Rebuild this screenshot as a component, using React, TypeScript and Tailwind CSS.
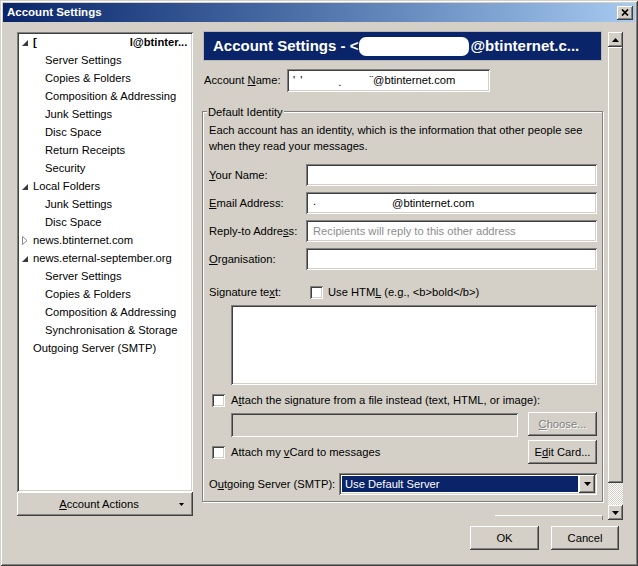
import React from "react";

const raised =
  "bg-[#d4d0c8] shadow-[inset_-1px_-1px_0_#404040,inset_1px_1px_0_#ffffff,inset_-2px_-2px_0_#808080,inset_2px_2px_0_#d4d0c8]";
const sunken =
  "shadow-[inset_1px_1px_0_#808080,inset_-1px_-1px_0_#ffffff,inset_2px_2px_0_#404040,inset_-2px_-2px_0_#d4d0c8]";

type TreeNode = { label: React.ReactNode; depth: 0 | 1; arrow?: "open" | "closed" };

const AccountLabel = () => (
  <span className="flex items-center font-bold">
    <span>[</span>
    <span className="inline-block w-[93px]" />
    <span>l@btinter...</span>
  </span>
);

const nodes: TreeNode[] = [
  { label: <AccountLabel />, depth: 0, arrow: "open" },
  { label: "Server Settings", depth: 1 },
  { label: "Copies & Folders", depth: 1 },
  { label: "Composition & Addressing", depth: 1 },
  { label: "Junk Settings", depth: 1 },
  { label: "Disc Space", depth: 1 },
  { label: "Return Receipts", depth: 1 },
  { label: "Security", depth: 1 },
  { label: "Local Folders", depth: 0, arrow: "open" },
  { label: "Junk Settings", depth: 1 },
  { label: "Disc Space", depth: 1 },
  { label: "news.btinternet.com", depth: 0, arrow: "closed" },
  { label: "news.eternal-september.org", depth: 0, arrow: "open" },
  { label: "Server Settings", depth: 1 },
  { label: "Copies & Folders", depth: 1 },
  { label: "Composition & Addressing", depth: 1 },
  { label: "Synchronisation & Storage", depth: 1 },
  { label: "Outgoing Server (SMTP)", depth: 0 },
];

const Arrow = ({ kind }: { kind?: "open" | "closed" }) => {
  if (kind === "open")
    return (
      <svg width="6" height="6" viewBox="0 0 6 6" className="mt-[2px]">
        <polygon points="6,0 6,6 0,6" fill="#3a3a3a" />
      </svg>
    );
  if (kind === "closed")
    return (
      <svg width="6" height="9" viewBox="0 0 6 9">
        <polygon points="0.5,0.5 5,4.5 0.5,8.5" fill="#fff" stroke="#8a8a8a" strokeWidth="1" />
      </svg>
    );
  return null;
};

const Check = () => <span className={`inline-block w-[13px] h-[13px] bg-white shrink-0 ${sunken}`} />;

const Tri = ({ dir }: { dir: "up" | "down" }) => (
  <svg width="7" height="4" viewBox="0 0 7 4">
    <polygon points={dir === "up" ? "0,4 3.5,0 7,4" : "0,0 7,0 3.5,4"} fill="#000" />
  </svg>
);

const Field = ({ children, className = "" }: { children?: React.ReactNode; className?: string }) => (
  <div className={`h-[22px] bg-white flex items-center pl-[7px] ${sunken} ${className}`}>{children}</div>
);

const Row = ({ label, children }: { label: React.ReactNode; children?: React.ReactNode }) => (
  <div className="flex items-center h-[22px]">
    <div className="w-[97px]">{label}</div>
    <Field className="w-[291px]">{children}</Field>
  </div>
);

export default function App() {
  return (
    <div className="w-[638px] h-[566px] bg-[#d4d0c8] p-[3px] flex flex-col text-[11.2px] text-black font-['Liberation_Sans',Arial,sans-serif] shadow-[inset_1px_1px_0_#d4d0c8,inset_-1px_-1px_0_#404040,inset_2px_2px_0_#ffffff,inset_-2px_-2px_0_#808080]">
      {/* title bar */}
      <div className="h-[19px] flex items-center bg-gradient-to-r from-[#0a246a] to-[#a6caf0] pl-[4px] pr-[2px]">
        <span className="text-white font-bold text-[11.5px] flex-1">Account Settings</span>
        <div className={`w-[16px] h-[14px] flex items-center justify-center ${raised}`}>
          <svg width="8" height="7" viewBox="0 0 8 7">
            <path d="M1 0.5 L7 6.5 M7 0.5 L1 6.5" stroke="#000" strokeWidth="1.7" />
          </svg>
        </div>
      </div>

      <div className="flex pl-[14px] pt-[10px]">
        {/* left column */}
        <div className="w-[176px] flex flex-col">
          <div className={`h-[460px] bg-white p-[2px] ${sunken}`}>
            <div className="-mt-px">
              {nodes.map((n, i) => (
                <div key={i} className={`h-[18px] flex items-center ${n.depth === 1 ? "pl-[26px]" : "pl-0"}`}>
                  {n.depth === 0 && (
                    <span className="w-[14px] flex items-center pl-[3px]">
                      <Arrow kind={n.arrow} />
                    </span>
                  )}
                  <span className="whitespace-nowrap">{n.label}</span>
                </div>
              ))}
            </div>
          </div>
          <div className={`h-[24px] flex items-center ${raised}`}>
            <span className="flex-1 text-center pl-[2px]">
              <u>A</u>ccount Actions
            </span>
            <span className="w-[14px] flex items-center">
              <svg width="5" height="3" viewBox="0 0 5 3">
                <polygon points="0,0 5,0 2.5,3" fill="#000" />
              </svg>
            </span>
          </div>
        </div>

        {/* right column */}
        <div className="ml-[7px] flex">
          <div className="w-[405px] flex flex-col">
            <div className="-mt-px ml-[3px] w-[399px] h-[30px] bg-[#0a246a] border border-[#b8b8b8] flex items-center pl-[9px] text-white font-bold text-[15px] whitespace-nowrap overflow-hidden">
              <span>Account Settings - &lt;</span>
              <span className="inline-block w-[110px] h-[19px] bg-white rounded-[7px] mx-[1px]" />
              <span>@btinternet.c...</span>
            </div>

            <div className="mt-[8px] h-[23px] flex items-center">
              <span className="ml-[4px] w-[83px]">
                Account <u>N</u>ame:
              </span>
              <div className={`w-[203px] h-[23px] bg-white flex items-center pl-[6px] ${sunken}`}>
                <span>'</span>
                <span className="ml-[5px]">'</span>
                <span className="ml-[36px] mt-[4px]">.</span>
                <span className="ml-[28px]">¨@btinternet.com</span>
              </div>
            </div>

            {/* Default Identity groupbox */}
            <div className="relative mt-[19px] ml-[2px] w-[401px] h-[391px] border border-[#808080] shadow-[inset_1px_1px_0_#ffffff,1px_1px_0_#ffffff] pl-[6px] pr-[5px] pt-[10px]">
              <span className="absolute -top-[8px] left-[4px] bg-[#d4d0c8] px-[1px]">Default Identity</span>
              <div className="leading-[16px]">
                Each account has an identity, which is the information that other people see
                <br />
                when they read your messages.
              </div>

              <div className="mt-[10px] flex flex-col gap-[6px]">
                <Row label={<><u>Y</u>our Name:</>} />
                <Row label={<><u>E</u>mail Address:</>}>
                  <span className="mt-[-4px]">.</span>
                  <span className="ml-[76px]">@btinternet.com</span>
                </Row>
                <Row label={<>Reply-to Addre<u>s</u>s:</>}>
                  <span className="text-[#8d8d8d]">Recipients will reply to this other address</span>
                </Row>
                <Row label={<><u>O</u>rganisation:</>} />
              </div>

              <div className="mt-[13px] h-[18px] flex items-center">
                <span className="w-[97px]">
                  Signature te<u>x</u>t:
                </span>
                <span className="ml-[4px] flex">
                  <Check />
                </span>
                <span className="ml-[5px]">
                  Use HTM<u>L</u> (e.g., &lt;b&gt;bold&lt;/b&gt;)
                </span>
              </div>

              <div className={`mt-[4px] ml-[22px] w-[366px] h-[80px] bg-white ${sunken}`} />

              <div className="mt-[7px] h-[16px] flex items-center pl-[3px]">
                <Check />
                <span className="ml-[6px]">
                  A<u>t</u>tach the signature from a file instead (text, HTML, or image):
                </span>
              </div>

              <div className="mt-[4px] h-[25px] flex items-start pl-[22px]">
                <div className={`mt-px w-[287px] h-[24px] ${sunken}`} />
                <div className={`ml-[10px] w-[69px] h-[24px] flex items-center justify-center text-[#808080] [text-shadow:1px_1px_0_#ffffff] ${raised}`}>
                  <span>
                    <u>C</u>hoose...
                  </span>
                </div>
              </div>

              <div className="mt-[3px] h-[24px] flex items-center pl-[3px]">
                <Check />
                <span className="ml-[6px] flex-1">
                  Attach my <u>v</u>Card to messages
                </span>
                <div className={`w-[69px] h-[24px] flex items-center justify-center ${raised}`}>
                  <span>
                    E<u>d</u>it Card...
                  </span>
                </div>
              </div>

              <div className="mt-[9px] h-[22px] flex items-center">
                <span className="w-[130px]">
                  O<u>u</u>tgoing Server (SMTP):
                </span>
                <div className={`w-[258px] h-[22px] bg-white p-[2px] flex ${sunken}`}>
                  <div className="flex-1 bg-[#0a246a] text-white flex items-center pl-[3px] border border-white">
                    Use Default Server
                  </div>
                  <div className={`w-[16px] flex items-center justify-center ${raised}`}>
                    <Tri dir="down" />
                  </div>
                </div>
              </div>
            </div>

            <div className="mt-[13px] ml-[295px] w-[108px] h-[5px] border-t border-white border-r border-r-[#808080]" />
          </div>

          {/* scrollbar */}
          <div className="ml-[3px] w-[15px] flex flex-col">
            <div className={`h-[15px] flex items-center justify-center ${raised}`}>
              <Tri dir="up" />
            </div>
            <div className={`h-[436px] ${raised}`} />
            <div className="h-[22px] bg-[repeating-conic-gradient(#d4d0c8_0_25%,#ffffff_0_50%)] bg-[length:2px_2px]" />
            <div className={`h-[15px] flex items-center justify-center ${raised}`}>
              <Tri dir="down" />
            </div>
          </div>
        </div>
      </div>

      {/* dialog buttons */}
      <div className="mt-[6px] flex justify-end pr-[16px] gap-[12px]">
        <div className={`w-[69px] h-[24px] flex items-center justify-center ${raised}`}>OK</div>
        <div className={`w-[68px] h-[24px] flex items-center justify-center ${raised}`}>Cancel</div>
      </div>
    </div>
  );
}
